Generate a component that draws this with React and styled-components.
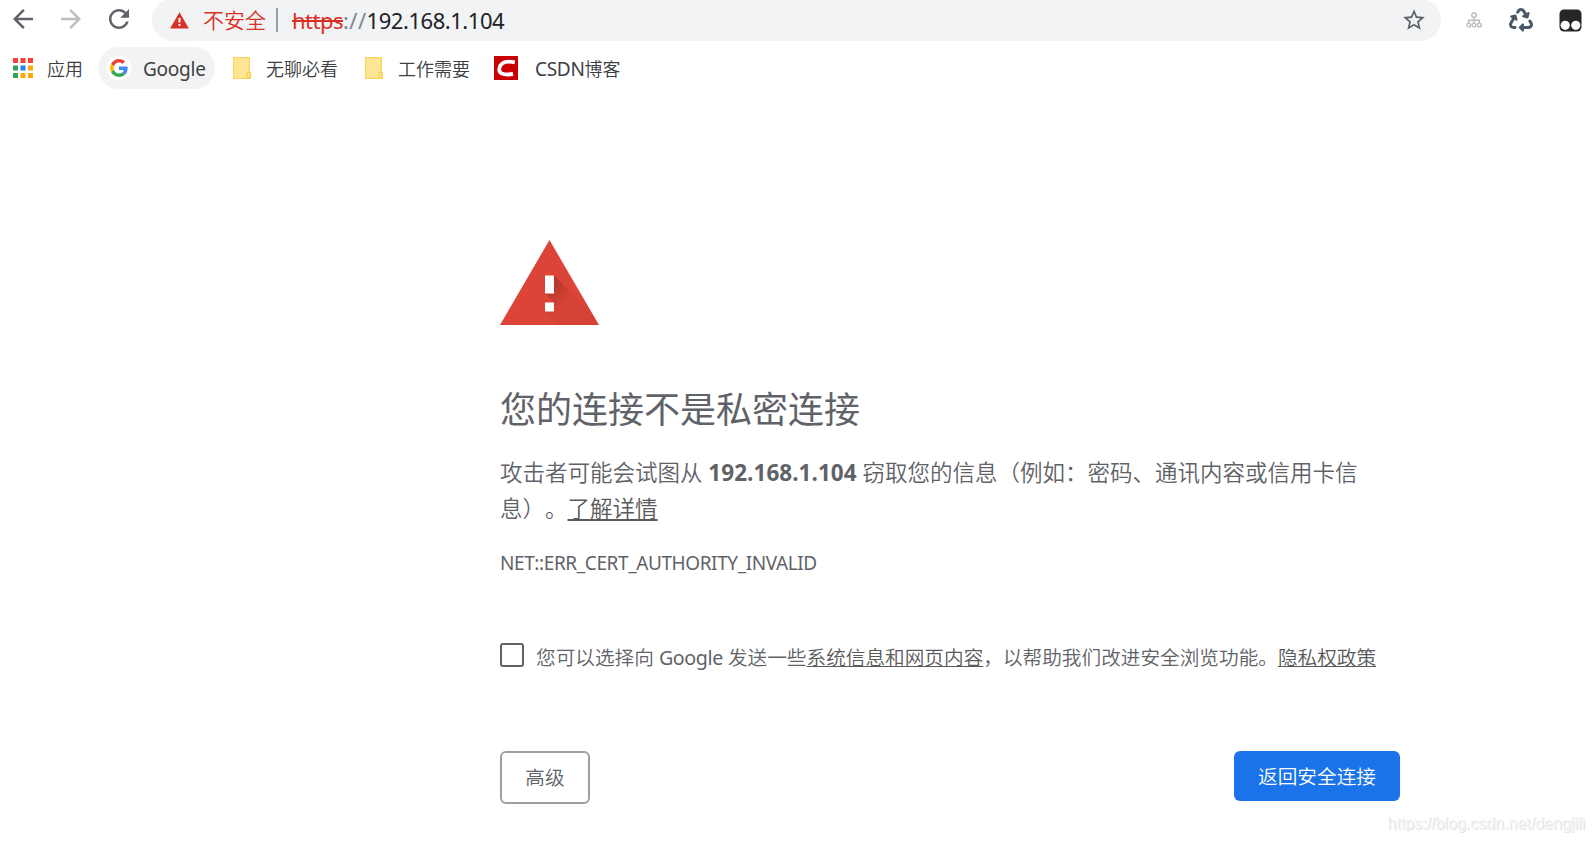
import React from 'react';
import styled, { createGlobalStyle } from 'styled-components';
import { FaRecycle } from 'react-icons/fa6';

const APP_COLORS = [
  '#f44336', '#f44336', '#f44336',
  '#34a062', '#1e88f0', '#fba90a',
  '#34a062', '#fba90a', '#fba90a',
];

const AppsIcon = () => (
  <svg width="20" height="20" viewBox="0 0 20 20">
    {APP_COLORS.map((color, i) => (
      <rect key={i} x={(i % 3) * 7.5} y={Math.floor(i / 3) * 7.5} width="5" height="5" fill={color} />
    ))}
  </svg>
);

const GoogleIcon = () => (
  <svg width="28" height="28" viewBox="0 0 28 28">
    <circle cx="14" cy="14" r="12.5" fill="#fff" />
    <g transform="translate(5 5) scale(0.375)">
      <path fill="#ea4335" d="M24 9.5c3.54 0 6.71 1.22 9.21 3.6l6.85-6.85C35.9 2.38 30.47 0 24 0 14.62 0 6.51 5.38 2.56 13.22l7.98 6.19C12.43 13.72 17.74 9.5 24 9.5z" />
      <path fill="#4285f4" d="M46.98 24.55c0-1.57-.15-3.09-.38-4.55H24v9.02h12.94c-.58 2.96-2.26 5.48-4.78 7.18l7.73 6c4.51-4.18 7.09-10.36 7.09-17.65z" />
      <path fill="#fbbc05" d="M10.53 28.59c-.48-1.45-.76-2.99-.76-4.59s.27-3.14.76-4.59l-7.98-6.19C.92 16.46 0 20.12 0 24c0 3.88.92 7.54 2.56 10.78l7.97-6.19z" />
      <path fill="#34a853" d="M24 48c6.48 0 11.93-2.13 15.89-5.81l-7.73-6c-2.15 1.45-4.92 2.3-8.16 2.3-6.26 0-11.57-4.22-13.47-9.91l-7.98 6.19C6.51 42.62 14.62 48 24 48z" />
    </g>
  </svg>
);

const FolderIcon = () => (
  <svg width="18" height="22" viewBox="0 0 18 22">
    <path d="M.6 .6H16.4V15.5H17.4V21.4H.6z" fill="#ffe594" stroke="#fbd65c" strokeWidth="1.2" />
    <path d="M14 21V16.500q0-1.500 1.500-1.500t1.500 1.500V21z" fill="#ffe594" stroke="#f6ca45" strokeWidth="1" />
  </svg>
);

const CsdnIcon = () => (
  <svg width="24" height="24" viewBox="0 0 24 24">
    <rect width="24" height="24" fill="#c80000" />
    <path d="M20.800 6.300C15.500 5.200 11 5.300 8.200 7.500c-3.600 2.900-4 8-.7 9.900 2.700 1.300 7.300 1.300 11.600.6" fill="none" stroke="#fff" strokeWidth="3.800" />
  </svg>
);

const SitemapIcon = () => (
  <svg width="16" height="16" viewBox="0 0 16 16" fill="none" stroke="#bdbdbd" strokeWidth="1.4">
    <circle cx="8" cy="3" r="2.300" />
    <circle cx="2.700" cy="13" r="1.900" />
    <circle cx="8" cy="13" r="1.900" />
    <circle cx="13.300" cy="13" r="1.900" />
    <path d="M8 5.300V11M2.700 11V8.200H13.300V11" />
  </svg>
);

const MonkeyIcon = () => (
  <svg width="23" height="23" viewBox="0 0 23 23">
    <rect x=".5" y=".5" width="22" height="22" rx="4.500" fill="#262626" />
    <circle cx="6.200" cy="16.300" r="4.600" fill="#fff" />
    <circle cx="16.800" cy="16.300" r="4.600" fill="#fff" />
  </svg>
);

const SmallWarning = () => (
  <svg width="19" height="17" viewBox="0 0 19 17">
    <path d="M9.500 .3L18.900 16.500H.1z" fill="#d93025" />
    <path d="M8.500 6h2v4.500h-2zM8.500 12h2v2h-2z" fill="#fff" />
  </svg>
);

const BigWarning = () => (
  <svg width="99" height="86" viewBox="0 0 99 86">
    <defs>
      <linearGradient id="shade" gradientUnits="userSpaceOnUse" x1="47" y1="46" x2="63" y2="62">
        <stop offset="0" stopColor="#000" stopOpacity="0.2" />
        <stop offset="1" stopColor="#000" stopOpacity="0.03" />
      </linearGradient>
      <clipPath id="triangle">
        <path d="M49.500 0L99 85H0z" />
      </clipPath>
    </defs>
    <path d="M49.500 0L99 85H0z" fill="#db4437" />
    <g clipPath="url(#triangle)" fill="url(#shade)">
      <path d="M54 35.500L104 85.500H59.500L45 71.500H54V62.500L45 53.500H54z" />
    </g>
    <path d="M45 35.500h9v18h-9zM45 62.500h9v9h-9z" fill="#fff" />
  </svg>
);

const NavIcon = ({ d, color = '#5f6368', size = 30 }) => (
  <svg width={size} height={size} viewBox="0 0 24 24" fill={color}>
    <path d={d} />
  </svg>
);

const BACK = 'M20 11H7.830l5.590-5.590L12 4l-8 8 8 8 1.410-1.410L7.830 13H20v-2z';
const FORWARD = 'M12 4l-1.410 1.410L16.170 11H4v2h12.170l-5.580 5.590L12 20l8-8z';
const RELOAD = 'M17.650 6.350C16.200 4.900 14.210 4 12 4c-4.420 0-7.990 3.580-7.990 8s3.570 8 7.990 8c3.730 0 6.840-2.550 7.730-6h-2.080c-.82 2.330-3.040 4-5.650 4-3.310 0-6-2.690-6-6s2.690-6 6-6c1.660 0 3.140.69 4.220 1.780L13 11h7V4l-2.350 2.350z';
const STAR = 'M22 9.240l-7.190-.62L12 2 9.190 8.630 2 9.240l5.460 4.730L5.820 21 12 17.270 18.180 21l-1.630-7.030L22 9.240zM12 15.400l-3.760 2.270 1-4.280-3.320-2.880 4.380-.38L12 6.100l1.710 4.040 4.380.38-3.320 2.880 1 4.280L12 15.400z';

const App = () => (
  <>
    <GlobalStyle />
    <Window>
      <Toolbar>
        <NavButtons>
          <NavIcon d={BACK} />
          <NavIcon d={FORWARD} color="#bdbfc1" />
          <NavIcon d={RELOAD} />
        </NavButtons>
        <AddressBar>
          <SmallWarning />
          <Insecure>不安全</Insecure>
          <Divider />
          <Url>
            <Scheme>https</Scheme>
            <Slashes>://</Slashes>
            <Host>192.168.1.104</Host>
          </Url>
          <NavIcon d={STAR} size={26} />
        </AddressBar>
        <Extensions>
          <SitemapIcon />
          <FaRecycle size={24} color="#4b5865" />
          <MonkeyIcon />
        </Extensions>
      </Toolbar>

      <Bookmarks>
        <Bookmark $gap={14} $width={85}><AppsIcon />应用</Bookmark>
        <Bookmark $gap={10} $width={117} $pad={7} $active><GoogleIcon /><BookmarkLatin>Google</BookmarkLatin></Bookmark>
        <Bookmark $gap={15} $width={132} $pad={18}><FolderIcon />无聊必看</Bookmark>
        <Bookmark $gap={15} $width={132} $pad={18}><FolderIcon />工作需要</Bookmark>
        <Bookmark $gap={17} $width={150} $pad={15}><CsdnIcon /><span><Spaced>CSDN</Spaced>博客</span></Bookmark>
      </Bookmarks>

      <Page>
        <BigWarning />
        <Heading>您的连接不是私密连接</Heading>
        <Message>
          攻击者可能会试图从 <strong>192.168.1.104</strong> 窃取您的信息（例如：密码、通讯内容或信用卡信息）。<Link>了解详情</Link>
        </Message>
        <ErrorCode>NET::ERR_CERT_AUTHORITY_INVALID</ErrorCode>
        <OptIn>
          <Checkbox type="checkbox" />
          <OptInText>
            您可以选择向 <Latin>Google</Latin> 发送一些<Link>系统信息和网页内容</Link>，以帮助我们改进安全浏览功能。<Link>隐私权政策</Link>
          </OptInText>
        </OptIn>
        <Actions>
          <AdvancedButton>高级</AdvancedButton>
          <SafetyButton>返回安全连接</SafetyButton>
        </Actions>
      </Page>
      <Watermark>https://blog.csdn.net/dengjili</Watermark>
    </Window>
  </>
);

export default App;


const GlobalStyle = createGlobalStyle`
  * {
    box-sizing: border-box;
  }

  body {
    margin: 0;
    background: #fff;
    font-family: "Noto Sans", "Noto Sans CJK SC", sans-serif;
    font-weight: 350;
    text-spacing-trim: space-all;
    overflow: hidden;
  }

  svg {
    display: block;
    flex-shrink: 0;
  }
`;

const Window = styled.div`
  display: flex;
  flex-direction: column;
  width: 1593px;
  height: 843px;
  overflow: hidden;
`;

const Toolbar = styled.div`
  display: flex;
  align-items: flex-start;
  height: 47px;
`;

const NavButtons = styled.div`
  display: flex;
  gap: 18px;
  width: 152px;
  padding: 4px 0 0 8px;
`;

const AddressBar = styled.div`
  display: flex;
  align-items: center;
  width: 1289px;
  height: 42px;
  margin-top: -1px;
  padding: 0 14px 0 18px;
  border-radius: 21px;
  background: #f1f3f4;
  font-size: 22px;
  line-height: 30px;
  white-space: nowrap;
`;

const Insecure = styled.span`
  margin-left: 14px;
  font-size: 21px;
  color: #d93025;
`;

const Divider = styled.span`
  width: 2px;
  height: 24px;
  margin: 0 14px 0 10px;
  background: #9aa0a6;
`;

const Url = styled.div`
  flex: 1;
  display: flex;
  padding-bottom: 1px;
  font-weight: 400;
`;

const Scheme = styled.span`
  color: #d93025;
  text-decoration: line-through;
  letter-spacing: -0.5px;
`;

const Slashes = styled.span`
  color: #80868b;
  letter-spacing: 0.4px;
`;

const Host = styled.span`
  color: #202124;
  letter-spacing: -0.45px;
`;

const Extensions = styled.div`
  display: flex;
  align-items: center;
  height: 40px;
  padding-left: 25px;
  gap: 27px;

  svg:last-child {
    margin-left: -1px;
  }
`;

const Bookmarks = styled.div`
  display: flex;
  height: 42px;
  padding-left: 13px;
`;

const Bookmark = styled.div`
  display: flex;
  align-items: center;
  gap: ${({ $gap }) => $gap}px;
  width: ${({ $width }) => $width}px;
  padding-left: ${({ $pad = 0 }) => $pad}px;
  border-radius: 21px;
  background: ${({ $active }) => ($active ? '#f3f3f3' : 'transparent')};
  color: #3c4043;
  font-size: 18px;
  white-space: nowrap;

  svg {
    margin-top: -1px;
  }
`;

const BookmarkLatin = styled.span`
  padding-top: 2px;
  font-size: 19px;
  font-weight: 400;
  letter-spacing: -0.25px;
`;

const Spaced = styled.span`
  font-size: 19px;
  font-weight: 400;
  letter-spacing: -0.3px;
`;

const Page = styled.main`
  width: 900px;
  margin: 151px 0 0 500px;
  color: #5f6368;
`;

const Heading = styled.h1`
  margin: 57px 0 0;
  font-size: 36px;
  font-weight: 400;
  line-height: 54px;
`;

const Message = styled.p`
  margin: 18px 0 0;
  font-size: 22.5px;
  line-height: 36px;

  strong {
    letter-spacing: 0.05px;
  }
`;

const Link = styled.a`
  color: #5a5a5a;
  text-decoration: underline;
`;

const ErrorCode = styled.div`
  margin-top: 18px;
  font-size: 19px;
  font-weight: 400;
  line-height: 36px;
  letter-spacing: -0.4px;
`;

const OptIn = styled.label`
  display: flex;
  margin-top: 62px;
  gap: 12px;
`;

const Checkbox = styled.input`
  appearance: none;
  flex-shrink: 0;
  width: 24px;
  height: 24px;
  margin: 0;
  border: 2px solid #5f6368;
  border-radius: 3px;
  background: #fff;
`;

const OptInText = styled.span`
  font-size: 19.65px;
  line-height: 30px;
  white-space: nowrap;
`;

const Latin = styled.span`
  font-weight: 400;
  letter-spacing: -0.4px;
`;

const Actions = styled.div`
  display: flex;
  justify-content: space-between;
  align-items: flex-start;
  margin-top: 78px;
`;

const Button = styled.button`
  padding: 1px 0 0;
  border-radius: 6px;
  font-family: inherit;
  font-size: 19.65px;
  font-weight: inherit;
  line-height: 30px;
`;

const AdvancedButton = styled(Button)`
  width: 90px;
  height: 53px;
  border: 2px solid #9aa0a6;
  background: #fff;
  color: #5f6368;
`;

const SafetyButton = styled(Button)`
  width: 166px;
  height: 50px;
  border: none;
  background: #1a73e8;
  color: #fff;
`;

const Watermark = styled.div`
  align-self: flex-end;
  margin: 10px 8px 0 0;
  color: #f4f4f4;
  font-family: "Liberation Sans", sans-serif;
  font-size: 16px;
  line-height: 20px;
  text-shadow: 1px 1px 0 #e4e4e4;
`;
